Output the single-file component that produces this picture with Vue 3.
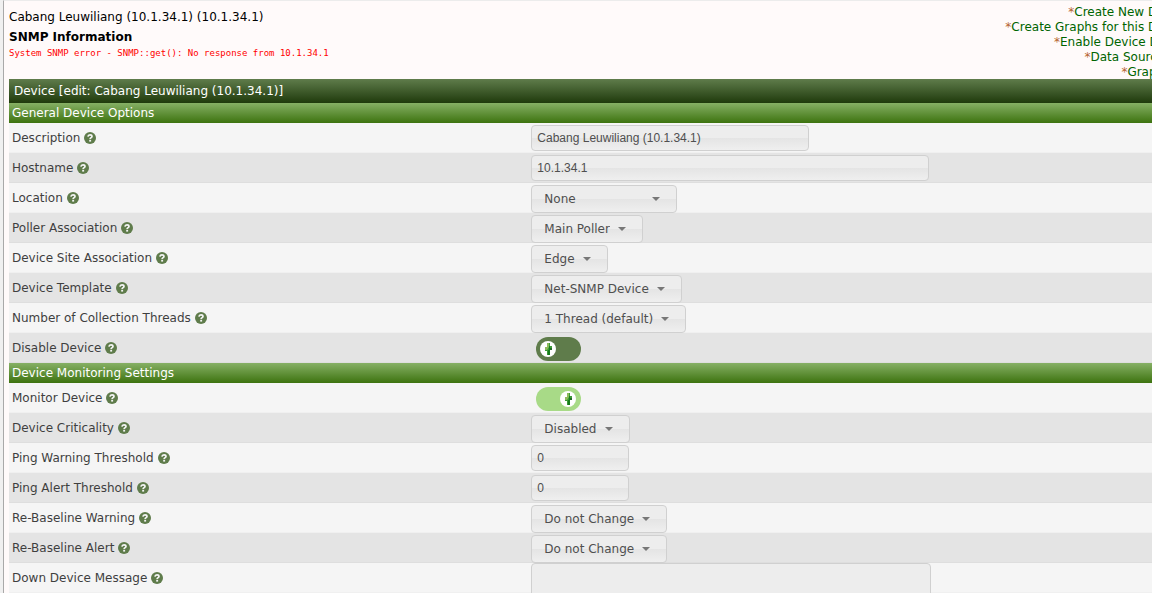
<script setup>
import { ref } from 'vue'

const links = [
  'Create New Device',
  'Create Graphs for this Device',
  'Enable Device Debug',
  'Data Source List',
  'Graph List',
]

const sections = ref([
  {
    title: 'General Device Options',
    fields: [
      { id: 'description', label: 'Description', type: 'text', size: 'medium', value: 'Cabang Leuwiliang (10.1.34.1)' },
      { id: 'hostname', label: 'Hostname', type: 'text', size: 'large', value: '10.1.34.1' },
      { id: 'location', label: 'Location', type: 'select', size: 'wide', value: 'None' },
      { id: 'poller', label: 'Poller Association', type: 'select', value: 'Main Poller' },
      { id: 'site', label: 'Device Site Association', type: 'select', value: 'Edge' },
      { id: 'template', label: 'Device Template', type: 'select', value: 'Net-SNMP Device' },
      { id: 'threads', label: 'Number of Collection Threads', type: 'select', value: '1 Thread (default)' },
      { id: 'disabled', label: 'Disable Device', type: 'switch', value: false },
    ],
  },
  {
    title: 'Device Monitoring Settings',
    fields: [
      { id: 'monitor', label: 'Monitor Device', type: 'switch', value: true },
      { id: 'criticality', label: 'Device Criticality', type: 'select', value: 'Disabled' },
      { id: 'ping-warning', label: 'Ping Warning Threshold', type: 'text', size: 'small', value: '0' },
      { id: 'ping-alert', label: 'Ping Alert Threshold', type: 'text', size: 'small', value: '0' },
      { id: 'baseline-warning', label: 'Re-Baseline Warning', type: 'select', value: 'Do not Change' },
      { id: 'baseline-alert', label: 'Re-Baseline Alert', type: 'select', value: 'Do not Change' },
      { id: 'down-message', label: 'Down Device Message', type: 'textarea', value: '' },
    ],
  },
])
</script>

<template>
  <main class="page">
    <header class="top">
      <div class="info">
        <div class="device-name">Cabang Leuwiliang (10.1.34.1) (10.1.34.1)</div>
        <h1 class="snmp-title">SNMP Information</h1>
        <div class="snmp-error">System SNMP error - SNMP::get(): No response from 10.1.34.1</div>
      </div>
      <nav class="links">
        <div v-for="link in links" :key="link"><span class="star">*</span><a href="#">{{ link }}</a></div>
      </nav>
    </header>

    <form class="form" @submit.prevent>
      <h2 class="title-bar">Device [edit: Cabang Leuwiliang (10.1.34.1)]</h2>
      <section v-for="section in sections" :key="section.title">
        <h3 class="section-bar">{{ section.title }}</h3>
        <div v-for="field in section.fields" :key="field.id" class="row">
          <div class="label-cell">
            <label :for="field.id">{{ field.label }}</label>
            <svg class="help" viewBox="0 0 12 12" aria-hidden="true">
              <circle cx="6" cy="6" r="6" fill="#5f7c4b" />
              <path d="M3.9 4.6C4.1 3.3 4.9 2.8 6 2.8C7.2 2.8 8 3.4 8 4.4C8 5.7 6.1 5.6 6.1 7.1" fill="none" stroke="#f5f5f5" stroke-width="1.7" />
              <rect x="5.2" y="7.8" width="1.9" height="1.8" fill="#f5f5f5" />
            </svg>
          </div>
          <div class="field-cell">
            <input v-if="field.type === 'text'" :id="field.id" v-model="field.value" type="text" class="box text-input" :class="field.size">
            <span v-else-if="field.type === 'select'" class="select-wrap">
              <select :id="field.id" v-model="field.value" class="box select" :class="field.size">
                <option>{{ field.value }}</option>
              </select>
            </span>
            <span v-else-if="field.type === 'switch'" class="switch" :class="{ on: field.value }">
              <input :id="field.id" v-model="field.value" type="checkbox">
              <span class="knob">
                <svg viewBox="0 0 16 16" aria-hidden="true">
                  <path d="M7 2H10V5H12V9H10V14H7V10H5V6H7Z" fill="#3c9a38" />
                  <path d="M7 2H9V6L7 9H5V6H7Z" fill="#8dbb5c" />
                  <path d="M9 5H10V14H8V9H9Z" fill="#167d1c" />
                  <path d="M10 7H12V9H10Z" fill="#1f6a22" />
                </svg>
              </span>
            </span>
            <textarea v-else :id="field.id" v-model="field.value" class="box textarea"></textarea>
          </div>
        </div>
      </section>
    </form>
  </main>
</template>

<style>
html,
body {
  height: 100%;
  overflow: hidden;
}
</style>

<style scoped>
* {
  box-sizing: border-box;
}

.page {
  margin-left: 3px;
  padding-left: 5px;
  border-left: 1px solid #a9a9a9;
  border-top: 1px solid #ececec;
  background: #fffafa;
  font: 12px/15px "DejaVu Sans", Verdana, sans-serif;
  color: #000;
  box-shadow: -3px 0 0 #f0f0f0;
  overflow: hidden;
}

.top {
  display: flex;
  justify-content: space-between;
  height: 78px;
  padding-top: 4px;
  white-space: nowrap;
}

.info {
  padding-top: 2px;
}

.device-name {
  line-height: 20px;
}

.snmp-title {
  margin: 0;
  font-size: 12px;
  line-height: 20px;
}

.snmp-error {
  font: 9px/12px "DejaVu Sans Mono", monospace;
  color: #f00;
}

.links {
  margin-right: -37px;
  text-align: right;
}

.links a {
  color: #006400;
  text-decoration: none;
}

.star {
  color: #b5622d;
}

.title-bar,
.section-bar {
  margin: 0;
  font-size: 12px;
  font-weight: normal;
  color: #fff;
}

.title-bar {
  padding-left: 5px;
  line-height: 24px;
  background: linear-gradient(#5f7c4b, #1f3a0c);
}

.section-bar {
  padding-left: 3px;
  line-height: 20px;
  background: linear-gradient(#86b065, #3d730f);
}

.row {
  display: flex;
  height: 30px;
  background: #f5f5f5;
  border-bottom: 1px solid #f0f0f0;
  color: #3f3f3f;
}

.row:nth-of-type(even) {
  background: #e4e4e4;
  border-bottom-color: #dedede;
}

.label-cell {
  display: flex;
  flex: 0 0 45.7%;
  align-items: center;
  gap: 4px;
  height: 30px;
  padding-left: 3px;
}

.help {
  width: 12px;
  height: 12px;
}

.label-cell label {
  line-height: 16px;
}

.field-cell {
  flex: 1;
}

.box {
  display: block;
  margin: 0;
  border: 1px solid #d0d0d0;
  border-radius: 4px;
  background: linear-gradient(#ededed 50%, #e4e4e4 50%, #efefef);
  color: #4f4f4f;
  outline: none;
}

.text-input {
  height: 26px;
  margin-top: 2px;
  padding: 0 5px;
  font: 12px "Liberation Sans", Arial, sans-serif;
}

.small {
  width: 98px;
}

.medium {
  width: 278px;
}

.large {
  width: 398px;
}

.select-wrap {
  position: relative;
  display: inline-block;
  vertical-align: top;
  padding-top: 2px;
}

.select-wrap::after {
  content: "";
  position: absolute;
  top: 14px;
  right: 17px;
  border: 4px solid transparent;
  border-top-color: #777;
  border-bottom: 0;
  pointer-events: none;
}

.select {
  appearance: none;
  height: 28px;
  padding: 0 32px 0 12px;
  font: 12px "DejaVu Sans", Verdana, sans-serif;
}

.wide {
  width: 146px;
}

.switch {
  position: relative;
  display: flex;
  width: 45px;
  height: 24px;
  margin: 4px 0 0 5px;
  padding: 4px;
  border-radius: 12px;
  background: #5f7c4b;
}

.switch.on {
  justify-content: flex-end;
  padding-right: 5px;
  background: #a8da87;
}

.switch input {
  position: absolute;
  inset: 0;
  width: 100%;
  height: 100%;
  margin: 0;
  opacity: 0;
}

.knob {
  width: 16px;
  height: 16px;
  border-radius: 50%;
  background: #fff;
}

.knob svg {
  display: block;
}

.textarea {
  width: 400px;
  height: 80px;
  background: #ededed;
  resize: none;
}
</style>
